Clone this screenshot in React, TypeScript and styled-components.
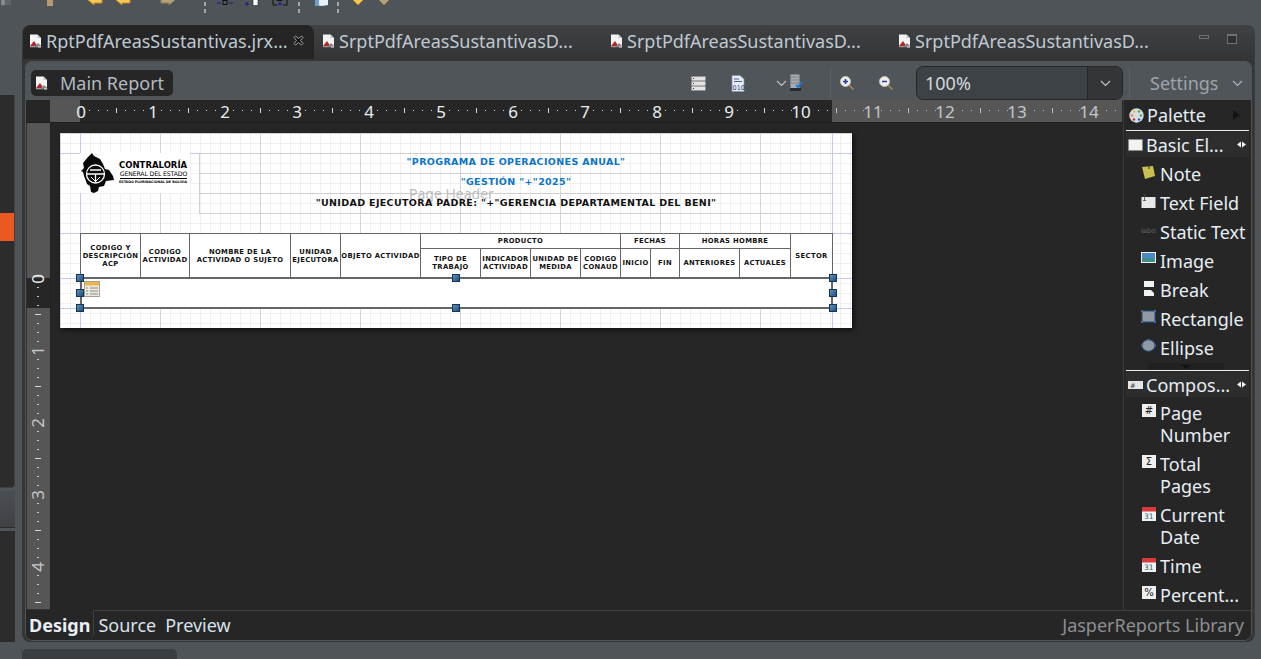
import React from "react"
import styled, { createGlobalStyle } from "styled-components"

const UI_FONT = `"Noto Sans", "Open Sans", sans-serif`
const REPORT_FONT = `"DejaVu Sans", sans-serif`

const GlobalStyle = createGlobalStyle`
  html, body {
    margin: 0;
    padding: 0;
    width: 1261px;
    height: 659px;
    overflow: hidden;
    background: #4f5458;
    font-family: ${UI_FONT};
  }
  * { box-sizing: border-box; }
`

const DocIcon = () => (
  <svg width="13" height="14" viewBox="0 0 13 14">
    <path d="M1 0.500h7.500l3.500 3.500v9.500H1z" fill="#f4f4f4" />
    <path d="M8.500 0.500v3.500h3.500z" fill="#b8c4cc" />
    <path d="M1 12l4-5 3.500 5z" fill="#b5242c" />
    <path d="M6 12l3-3 4 3.500H6z" fill="#8a8a8a" />
    <rect x="1" y="12.600" width="8" height="1" fill="#222" />
  </svg>
)

const CloseIcon = () => (
  <svg width="11" height="11" viewBox="0 0 11 11">
    <path d="M1 2.500L2.500 1 5.500 3.500 8.500 1 10 2.500 7.500 5.500 10 8.500 8.500 10 5.500 7.500 2.500 10 1 8.500 3.500 5.500z" fill="#111" stroke="#a9a9a9" strokeWidth="1" />
  </svg>
)

const Chevron = ({ color = "#c2c2c2" }: { color?: string }) => (
  <svg width="11" height="7" viewBox="0 0 11 7">
    <path d="M1 1l4.500 4.500L10 1" fill="none" stroke={color} strokeWidth="1.200" />
  </svg>
)

const ArrowIcon = ({ color, edge, flip }: { color: string; edge: string; flip?: boolean }) => (
  <svg width="16" height="8" viewBox="0 0 16 8" style={flip ? { transform: "scaleX(-1)" } : undefined}>
    <path d="M1 2L7 7V5h8V0H3z" fill={color} stroke={edge} strokeWidth="1" />
  </svg>
)

const AlignIcon = ({ kind }: { kind: number }) => (
  <svg width="16" height="7" viewBox="0 0 16 7">
    {kind === 0 && <path d="M0 4h4M12 4h4" stroke="#14149a" strokeWidth="1.200" />}
    {kind === 0 && <rect x="6" y="1.500" width="4" height="4" fill="none" stroke="#111" />}
    {kind === 1 && <rect x="9" y="0" width="5" height="6.500" fill="#fff" stroke="#222" strokeWidth="0.600" />}
    {kind === 1 && <path d="M1 5h4M3 3v3.500" stroke="#14149a" strokeWidth="1.100" />}
    {kind === 2 && <path d="M1 1v5h4M15 1v5h-4M5 0v1.500h5V0" fill="none" stroke="#111" />}
    {kind === 2 && <path d="M8 2.500v4M6 5h4" stroke="#14149a" strokeWidth="1" />}
  </svg>
)

const ListIcon = () => (
  <svg width="15" height="15" viewBox="0 0 15 15">
    <rect x="0.500" y="0.500" width="14" height="14" fill="#e4e4e4" stroke="#8a8a8a" strokeWidth="0.500" />
    <path d="M0 5h15M0 10h15" stroke="#555" strokeWidth="0.800" />
    <path d="M2 2.500h1M2 7.500h1M2 12.500h1" stroke="#333" strokeWidth="1" />
  </svg>
)

const BinaryIcon = () => (
  <svg width="14" height="17" viewBox="0 0 14 17">
    <path d="M1 0.500h8l4 3.500v12.500H1z" fill="#e9edf3" stroke="#8792a6" strokeWidth="0.700" />
    <path d="M3 4h5M3 6.500h8" stroke="#3960a8" strokeWidth="1" />
    <text x="1.500" y="15" fontSize="6.500" fontFamily={REPORT_FONT} fill="#1f3f7a">010</text>
  </svg>
)

const CompileIcon = () => (
  <svg width="13" height="18" viewBox="0 0 13 18">
    <rect x="0.500" y="0.500" width="9" height="14" fill="#a8adb3" />
    <path d="M1 3h8M1 6h8M1 9h8" stroke="#777" strokeWidth="0.800" />
    <rect x="0" y="14" width="11" height="3" fill="#2a2a2a" />
    <path d="M6 11l2 2 4-5" fill="none" stroke="#1e78d2" strokeWidth="2" />
  </svg>
)

const ZoomIcon = ({ plus }: { plus?: boolean }) => (
  <svg width="14" height="14" viewBox="0 0 14 14">
    <path d="M9 9l4.500 4.500" stroke="#a88a55" strokeWidth="1.500" />
    <circle cx="5.500" cy="5.500" r="5" fill="#eeeee8" stroke="#c8c2a8" />
    <path d={plus ? "M3 5.500h5M5.500 3v5" : "M3 5.500h5"} stroke="#23389a" strokeWidth="1.600" />
  </svg>
)

const PaletteIcon = () => (
  <svg width="15" height="15" viewBox="0 0 15 15">
    <circle cx="7.500" cy="7.500" r="7.200" fill="#d6dde2" />
    <circle cx="5" cy="3.500" r="1.200" fill="#e8c028" />
    <circle cx="10" cy="3.500" r="1.200" fill="#4caf3c" />
    <circle cx="3" cy="7.500" r="1.200" fill="#e8841c" />
    <circle cx="12" cy="7.500" r="1.200" fill="#48a848" />
    <circle cx="5" cy="11.500" r="1.200" fill="#cc2b2b" />
    <circle cx="10" cy="11.500" r="1.200" fill="#2a58c8" />
  </svg>
)

const SectionIcon = ({ mark }: { mark?: boolean }) => (
  <svg width="15" height="12" viewBox="0 0 15 12">
    {mark ? (
      <>
        <rect x="0" y="2" width="15" height="8" fill="#e4e4e4" />
        <text x="2" y="8.500" fontSize="6.500" fontFamily={REPORT_FONT} fill="#333">#</text>
      </>
    ) : (
      <rect x="0.500" y="0.500" width="14" height="11" fill="#f2f2f2" stroke="#888" strokeWidth="1" strokeDasharray="1 1" />
    )}
  </svg>
)

const PinIcon = () => (
  <svg width="9" height="7" viewBox="0 0 9 7">
    <path d="M0 3.500L4 0.500v6zM9 3.500L5 0.500v6z" fill="#f2f2f2" />
  </svg>
)

const ElementIcon = ({ kind }: { kind: string }) => {
  switch (kind) {
    case "note":
      return (
        <svg width="15" height="15" viewBox="0 0 15 15">
          <path d="M1 2l11-1 2 10-10 3z" fill="#c9bf52" />
          <path d="M8 0v4" stroke="#333" strokeWidth="1" />
        </svg>
      )
    case "text":
      return (
        <svg width="15" height="15" viewBox="0 0 15 15">
          <rect x="0.500" y="3" width="14" height="11" fill="#e8e8e8" />
          <path d="M2 0.500h3M3.500 0.500v6M2 6.500h3" stroke="#444" strokeWidth="0.800" />
        </svg>
      )
    case "label":
      return (
        <svg width="15" height="15" viewBox="0 0 15 15">
          <text x="0" y="10" fontSize="6.500" fontFamily={REPORT_FONT} fill="#666">label</text>
        </svg>
      )
    case "image":
      return (
        <svg width="15" height="11" viewBox="0 0 15 11">
          <rect width="15" height="11" fill="#f0f0f0" />
          <rect x="1" y="1" width="13" height="5" fill="#4d88c4" />
          <rect x="1" y="6" width="13" height="4" fill="#3f8f88" />
        </svg>
      )
    case "break":
      return (
        <svg width="12" height="15" viewBox="0 0 12 15">
          <rect x="1" y="0" width="10" height="6" fill="#eef2f0" />
          <path d="M1 9h7l3 3v3H1z" fill="#eef2f0" />
        </svg>
      )
    case "rect":
      return (
        <svg width="15" height="13" viewBox="0 0 15 13">
          <rect x="1" y="1" width="13" height="11" fill="#8f9aa5" stroke="#2c4d78" strokeWidth="1" />
          <path d="M0 0h2v2H0zM13 0h2v2h-2zM0 11h2v2H0zM13 11h2v2h-2z" fill="#3f6fa8" />
        </svg>
      )
    case "ellipse":
      return (
        <svg width="15" height="13" viewBox="0 0 15 13">
          <ellipse cx="7.500" cy="6.500" rx="6.500" ry="5.800" fill="#8f9aa5" stroke="#2c4d78" strokeWidth="1" />
          <path d="M6.500 0h2v1.500h-2zM0 5.500h1.500v2H0zM13.500 5.500H15v2h-1.500z" fill="#3f6fa8" />
        </svg>
      )
    case "calendar":
      return (
        <svg width="14" height="15" viewBox="0 0 14 15">
          <rect y="1" width="14" height="14" fill="#eef2f2" />
          <rect y="1" width="14" height="4.500" fill="#d63a3a" />
          <text x="2" y="13" fontSize="7.500" fontFamily={REPORT_FONT} fill="#39606a">31</text>
        </svg>
      )
    default:
      return (
        <svg width="14" height="13" viewBox="0 0 14 13">
          <rect width="14" height="13" fill="#efefef" />
          <text x="7" y="10" fontSize="10" textAnchor="middle" fontFamily={REPORT_FONT} fill="#222">{kind}</text>
        </svg>
      )
  }
}

const TableIcon = () => (
  <svg width="16" height="16" viewBox="0 0 16 16">
    <rect x="0.500" y="0.500" width="15" height="15" fill="#ece8dc" stroke="#a5a08f" />
    <rect x="1" y="1" width="14" height="3.500" fill="#e8b84c" />
    <path d="M2 7h2M6 7h8M2 10h2M6 10h8M2 13h2M6 13h8" stroke="#8d8d8d" strokeWidth="1" />
  </svg>
)

const BoliviaLogo = () => (
  <svg width="36" height="40" viewBox="0 0 36 40">
    <path d="M8 4L12 0l2 3 6 3 3 5 2 5 4 1 4 6 1 4-8 1-2 5-5 1-1 4-4 2-3-1-1-6-3-2-3-8-1-4-2-1 3-3-1-5z" fill="#0a0a0a" />
    <circle cx="15.500" cy="21" r="9" fill="none" stroke="#fff" strokeWidth="1.300" />
    <path d="M7 21h17M15.500 21v8M10 17h11" stroke="#fff" strokeWidth="1.300" />
    <path d="M11 24l4 4M20 24l-4 4" stroke="#fff" strokeWidth="1" />
  </svg>
)

const Screen = styled.div`
  width: 1261px;
  height: 659px;
  display: grid;
  grid-template-columns: 22px 1233px 6px;
  grid-template-rows: 25px 617px 17px;
  background: #4f5458;
  overflow: hidden;
`

const TopBar = styled.div`
  grid-column: 1 / 4;
  display: flex;
  align-items: flex-start;
  overflow: hidden;
`

const TopSlot = styled.div<{ $w: number }>`
  flex: 0 0 ${(p) => p.$w}px;
  height: 6px;
  display: flex;
  align-items: flex-end;
  justify-content: flex-end;
  overflow: hidden;
`

const TopSep = styled.div<{ $w: number }>`
  flex: 0 0 ${(p) => p.$w}px;
  display: flex;
  flex-direction: column;
  align-items: flex-end;
  gap: 3px;
  padding-top: 2px;
  &::before, &::after {
    content: "";
    width: 2px;
    height: 4px;
    background: #a5a7a8;
  }
`

const LeftDock = styled.div`
  display: flex;
  flex-direction: column;
  padding-top: 70px;
`

const DockPanel = styled.div`
  width: 15px;
  height: 393px;
  background: #2c2c2c;
  border-right: 1px solid #3e4143;
  border-bottom: 1px solid #3e4143;
  border-radius: 0 0 4px 0;
  padding-top: 118px;
`

const DockMarker = styled.div`
  width: 14px;
  height: 28px;
  background: #ea5a20;
`

const DockGap = styled.div`
  width: 15px;
  height: 37px;
  margin-top: 3px;
  background: linear-gradient(#4a4e52, #3f4245);
  border-bottom: 1px solid #2c2c2c;
`

const DockPanelLower = styled.div`
  width: 15px;
  flex: 1;
  margin-top: 3px;
  background: #2c2c2c;
`

const Editor = styled.div`
  display: flex;
  flex-direction: column;
  background: linear-gradient(#3f4143, #333537 33px);
  border-radius: 8px 8px 8px 8px;
  padding: 0 2px 1px 3px;
  border-right: 1px solid #3a3c3e;
  height: 617px;
`

const TabStrip = styled.div`
  height: 34px;
  flex: none;
  margin-left: -2px;
  display: flex;
  align-items: stretch;
`

const Tab = styled.div<{ $active?: boolean; $w: number }>`
  flex: 0 0 ${(p) => p.$w}px;
  display: flex;
  align-items: center;
  gap: 4px;
  padding: 0 0 3px ${(p) => (p.$active ? 6 : 8)}px;
  background: ${(p) => (p.$active ? "#252525" : "transparent")};
  border-radius: 8px 8px 0 0;
  color: #bfc9d2;
  font-size: 18px;
  white-space: nowrap;
`

const TabClose = styled.span`
  margin-left: auto;
  margin-right: 10px;
  display: flex;
`

const WindowButtons = styled.div`
  margin-left: auto;
  display: flex;
  align-items: center;
  gap: 18px;
  padding: 0 15px 6px 0;
`

const MinimizeGlyph = styled.div`
  width: 10px;
  height: 4px;
  margin-bottom: 5px;
  background: #3c3e40;
  border: 1px solid #6e7173;
`

const MaximizeGlyph = styled.div`
  width: 10px;
  height: 10px;
  background: #2e3032;
  border: 1px solid #6e7173;
  border-top-width: 2px;
`

const InnerPanel = styled.div`
  flex: 1;
  margin-top: 2px;
  min-height: 0;
  display: flex;
  flex-direction: column;
  background: #262626;
  border: 1px solid #515457;
  border-radius: 6px 6px 8px 8px;
  overflow: hidden;
`

const Toolbar = styled.div`
  height: 38px;
  flex: none;
  display: flex;
  align-items: center;
  background: #505559;
  padding: 4px 0 0 5px;
`

const MainReport = styled.div`
  width: 142px;
  height: 26px;
  display: flex;
  align-items: center;
  gap: 12px;
  padding-left: 4px;
  background: #262626;
  border-radius: 5px;
  color: #b3bac0;
  font-size: 18px;
`

const ToolIcon = styled.div<{ $ml: number }>`
  margin-left: ${(p) => p.$ml}px;
  display: flex;
  align-items: center;
`

const ToolSep = styled.div<{ $ml: number }>`
  margin-left: ${(p) => p.$ml}px;
  width: 1px;
  height: 30px;
  background: #5c6165;
`

const ZoomCombo = styled.div`
  margin-left: 23px;
  width: 207px;
  height: 34px;
  display: flex;
  align-items: stretch;
  background: #3d4246;
  border: 1px solid #262626;
  border-radius: 7px;
  overflow: hidden;
  color: #d4d8dc;
  font-size: 18px;
`

const ZoomValue = styled.div`
  flex: 1;
  display: flex;
  align-items: center;
  padding-left: 8px;
  border-right: 1px solid #262626;
`

const ZoomButton = styled.div`
  flex: 0 0 34px;
  display: flex;
  align-items: center;
  justify-content: center;
  background: #333538;
`

const SettingsLabel = styled.div`
  margin-left: 20px;
  color: #9ea4a9;
  font-size: 18px;
  width: 82px;
`

const Body = styled.div`
  flex: 1;
  min-height: 0;
  display: flex;
`

const DesignArea = styled.div`
  flex: 0 0 1097px;
  display: flex;
  flex-direction: column;
  min-width: 0;
`

const RulerRow = styled.div`
  flex: none;
  height: 23px;
  display: flex;
  background: #262626;
  border-bottom: 1px solid #1e1e1e;
`

const RulerCorner = styled.div`
  flex: 0 0 24px;
`

const CanvasRow = styled.div`
  flex: 1;
  min-height: 0;
  display: flex;
`

const RulerColumn = styled.div`
  flex: 0 0 24px;
  padding-left: 1px;
  background: #303030;
`

const CanvasScroll = styled.div`
  flex: 1;
  min-width: 0;
  padding: 10px 0 0 9px;
  background: #262626;
  border-left: 1px solid #202020;
`

const ReportPage = styled.div`
  position: relative;
  width: 792px;
  height: 195px;
  box-shadow: 2px 2px 5px rgba(0, 0, 0, 0.6);
  background-color: #fff;
  background-image:
    linear-gradient(to right, #d6d6d6 1px, transparent 1px),
    linear-gradient(to bottom, #d6d6d6 1px, transparent 1px),
    linear-gradient(to right, #f0f0f0 1px, transparent 1px),
    linear-gradient(to bottom, #f0f0f0 1px, transparent 1px);
  background-size: 100px 100px, 100px 100px, 10px 10px, 10px 10px;
  font-family: ${REPORT_FONT};
`

const Guide = styled.div<{ $v?: boolean; $at: number }>`
  position: absolute;
  background: #c8c8f4;
  ${(p) =>
    p.$v
      ? `left: ${p.$at}px; top: 0; bottom: 0; width: 1px;`
      : `top: ${p.$at}px; left: 0; right: 0; height: 1px;`}
`

const HeaderLine = styled.div<{ $y: number }>`
  position: absolute;
  left: 139px;
  width: 633px;
  top: ${(p) => p.$y}px;
  height: 1px;
  background: #cfcfcf;
`

const HeaderEdge = styled.div`
  position: absolute;
  left: 139px;
  top: 20px;
  width: 1px;
  height: 60px;
  background: #cfcfcf;
`

const HeaderText = styled.div<{ $y: number; $blue?: boolean }>`
  position: absolute;
  left: 140px;
  width: 632px;
  top: ${(p) => p.$y}px;
  height: 20px;
  line-height: 20px;
  text-align: center;
  font-weight: 700;
  font-size: 9.500px;
  letter-spacing: 0.350px;
  white-space: nowrap;
  color: ${(p) => (p.$blue ? "#0a74c8" : "#111")};
`

const BandLabel = styled.div`
  position: absolute;
  left: 349px;
  top: 52px;
  font-family: ${UI_FONT};
  font-size: 14px;
  line-height: 18px;
  color: #bdbdbd;
`

const LogoBox = styled.div`
  position: absolute;
  left: 20px;
  top: 20px;
  width: 110px;
  height: 40px;
  background: #fff;
  display: flex;
  align-items: center;
  gap: 3px;
`

const LogoText = styled.div`
  display: flex;
  flex-direction: column;
  color: #000;
  white-space: nowrap;
  align-items: flex-end;
`

const LogoTitle = styled.div`
  font-weight: 700;
  font-size: 8.500px;
  line-height: 10px;
`

const LogoSub = styled.div`
  font-size: 6.200px;
  line-height: 8px;
  letter-spacing: -0.150px;
  border-bottom: 1px solid #000;
`

const LogoTiny = styled.div`
  font-size: 3.300px;
  font-weight: 700;
  line-height: 7px;
`

const Cell = styled.div<{ $x: number; $y: number; $w: number; $h: number }>`
  position: absolute;
  left: ${(p) => p.$x}px;
  top: ${(p) => p.$y}px;
  width: ${(p) => p.$w}px;
  height: ${(p) => p.$h}px;
  display: flex;
  align-items: center;
  justify-content: center;
  text-align: center;
  white-space: pre;
  font-size: 6.800px;
  font-weight: 700;
  line-height: 8px;
  letter-spacing: 0.350px;
  color: #111;
  background: #fff;
  border: 1px solid #666;
`

const SelectedBand = styled.div`
  position: absolute;
  left: 20px;
  top: 144px;
  width: 753px;
  height: 32px;
  background: #fff;
  border: 2px solid #666;
  padding: 2px 0 0 2px;
`

const Handle = styled.div<{ $x: number; $y: number }>`
  position: absolute;
  left: ${(p) => p.$x - 4}px;
  top: ${(p) => p.$y - 4}px;
  width: 8px;
  height: 8px;
  background: linear-gradient(135deg, #5f92bf, #1f4f7f);
  border: 1px solid #16334f;
`

const Palette = styled.div`
  flex: 1;
  min-width: 0;
  display: flex;
  flex-direction: column;
  background: #262626;
  border-left: 1px solid #3a3a3a;
  color: #e6eef4;
  font-size: 18px;
`

const PaletteHeader = styled.div`
  flex: none;
  height: 31px;
  margin: 0 2px;
  display: flex;
  align-items: center;
  gap: 3px;
  padding-left: 3px;
  border-bottom: 1px solid #f0f0f0;
`

const PaletteArrow = styled.div`
  margin-left: auto;
  margin-right: 9px;
  width: 0;
  height: 0;
  border-left: 7px solid #141414;
  border-top: 5px solid transparent;
  border-bottom: 5px solid transparent;
`

const DrawerHead = styled.div`
  flex: none;
  height: 25px;
  margin: 1px 2px 0;
  display: flex;
  align-items: center;
  gap: 3px;
  padding-left: 2px;
  background: #2d2d2d;
`

const DrawerPin = styled.div`
  margin-left: auto;
  margin-right: 3px;
  display: flex;
`

const DrawerItems = styled.div<{ $h: number; $top: number }>`
  position: relative;
  flex: none;
  height: ${(p) => p.$h}px;
  overflow: hidden;
  padding: ${(p) => p.$top}px 0 0 17px;
`

const DrawerLine = styled.div`
  height: 1px;
  flex: none;
  margin: 0 2px;
  background: #f0f0f0;
`

const PaletteItem = styled.div`
  display: flex;
  gap: 4px;
  padding: 3px 0 4px;
  line-height: 22px;
  color: #e6eef4;
`

const ItemIcon = styled.div`
  flex: 0 0 15px;
  height: 18px;
  display: flex;
  align-items: flex-start;
  justify-content: center;
  padding-top: 2px;
`

const ItemLabel = styled.span`
  white-space: pre;
`

const ScrollHint = styled.div`
  position: absolute;
  left: 24px;
  bottom: 0;
  width: 76px;
  height: 7px;
  background: #202020;
  display: flex;
  justify-content: center;
  &::after {
    content: "";
    margin-top: 2px;
    border-left: 4px solid transparent;
    border-right: 4px solid transparent;
    border-top: 4px solid #111;
  }
`

const Footer = styled.div`
  flex: none;
  height: 30px;
  display: flex;
  align-items: stretch;
  background: #262626;
  font-size: 18px;
  color: #d8e2ea;
  padding-bottom: 1px;
`

const FooterTab = styled.div<{ $active?: boolean }>`
  display: flex;
  align-items: center;
  padding: 0 ${(p) => (p.$active ? 3 : 5)}px 0 ${(p) => (p.$active ? 3 : 4)}px;
  font-weight: ${(p) => (p.$active ? 700 : 400)};
  border-top: 1px solid ${(p) => (p.$active ? "transparent" : "#414141")};
  ${(p) => p.$active && "border-right: 1px solid #414141; border-radius: 0 0 6px 0; color: #e8eff5;"}
`

const FooterFill = styled.div`
  flex: 1;
  border-top: 1px solid #414141;
  display: flex;
  align-items: center;
  justify-content: flex-end;
  padding-right: 7px;
  color: #8c8f92;
`

const BottomRow = styled.div`
  grid-column: 1 / 4;
  padding: 8px 0 0 22px;
  margin-top: -1px;
  display: flex;
`

const BottomStub = styled.div`
  width: 155px;
  height: 10px;
  background: #3b3e41;
  border-radius: 5px 5px 0 0;
`

const HRuler = () => {
  const ticks: React.ReactNode[] = []
  for (let i = 0; i * 9 <= 1072 - 30; i++) {
    const x = 30 + i * 9
    const lit = x <= 782
    const colour = lit ? "#d8d8d8" : "#bcbcbc"
    if (i % 8 === 0) {
      ticks.push(
        <text key={i} x={x + 1} y={18} fill={lit ? "#e8eef2" : "#c2c6ca"} fontSize="17" textAnchor="middle" fontFamily={UI_FONT}>
          {i / 8}
        </text>
      )
    } else if (i % 4 === 0) {
      ticks.push(<rect key={i} x={x} y={8} width="1" height="5" fill={colour} />)
    } else {
      ticks.push(<rect key={i} x={x} y={10} width="1" height="1" fill={colour} />)
    }
  }
  return (
    <svg width="1072" height="22" viewBox="0 0 1072 22">
      <rect x="0" y="0" width="30" height="22" fill="#565656" />
      <rect x="782" y="0" width="290" height="22" fill="#565656" />
      {ticks}
    </svg>
  )
}

const VRuler = () => {
  const top = 155
  const ticks: React.ReactNode[] = []
  for (let i = 0; top + i * 9 < 486; i++) {
    const y = top + i * 9
    if (i % 8 === 0) {
      const n = i / 8
      ticks.push(
        <text key={i} x={0} y={0} transform={`translate(17 ${y + 1}) rotate(-90)`} fill={n === 0 ? "#e8eef2" : "#c2c6ca"} fontSize="17" textAnchor="middle" fontFamily={UI_FONT}>
          {n}
        </text>
      )
    } else if (i % 4 === 0) {
      ticks.push(<rect key={i} x={8} y={y} width="6" height="1" fill="#d8d8d8" />)
    } else {
      ticks.push(<rect key={i} x={10} y={y} width="2" height="1" fill="#c8c8c8" />)
    }
  }
  return (
    <svg width="23" height="486" viewBox="0 0 23 486">
      <rect width="23" height="486" fill="#565656" />
      <rect y={top} width="23" height="30" fill="#262626" />
      {ticks}
    </svg>
  )
}

const cells = [
  { x: 20, y: 100, w: 61, h: 45, t: "CODIGO Y\nDESCRIPCIÓN\nACP" },
  { x: 80, y: 100, w: 50, h: 45, t: "CODIGO\nACTIVIDAD" },
  { x: 129, y: 100, w: 102, h: 45, t: "NOMBRE DE LA\nACTIVIDAD O SUJETO" },
  { x: 230, y: 100, w: 51, h: 45, t: "UNIDAD\nEJECUTORA" },
  { x: 280, y: 100, w: 81, h: 45, t: "OBJETO ACTIVIDAD" },
  { x: 360, y: 100, w: 201, h: 16, t: "PRODUCTO" },
  { x: 360, y: 115, w: 61, h: 30, t: "TIPO DE\nTRABAJO" },
  { x: 420, y: 115, w: 51, h: 30, t: "INDICADOR\nACTIVIDAD" },
  { x: 470, y: 115, w: 51, h: 30, t: "UNIDAD DE\nMEDIDA" },
  { x: 520, y: 115, w: 41, h: 30, t: "CODIGO\nCONAUD" },
  { x: 560, y: 100, w: 60, h: 16, t: "FECHAS" },
  { x: 560, y: 115, w: 31, h: 30, t: "INICIO" },
  { x: 590, y: 115, w: 30, h: 30, t: "FIN" },
  { x: 619, y: 100, w: 112, h: 16, t: "HORAS HOMBRE" },
  { x: 619, y: 115, w: 61, h: 30, t: "ANTERIORES" },
  { x: 679, y: 115, w: 52, h: 30, t: "ACTUALES" },
  { x: 730, y: 100, w: 43, h: 45, t: "SECTOR" },
]

const handles = [
  [20, 145], [20, 160], [20, 175],
  [396, 145], [396, 175],
  [773, 145], [773, 160], [773, 175],
]

const basicItems = [
  { k: "note", t: "Note" },
  { k: "text", t: "Text Field" },
  { k: "label", t: "Static Text" },
  { k: "image", t: "Image" },
  { k: "break", t: "Break" },
  { k: "rect", t: "Rectangle" },
  { k: "ellipse", t: "Ellipse" },
]

const compositeItems = [
  { k: "#", t: "Page\nNumber" },
  { k: "Σ", t: "Total\nPages" },
  { k: "calendar", t: "Current\nDate" },
  { k: "calendar", t: "Time" },
  { k: "%", t: "Percent..." },
]

export default function App() {
  return (
    <Screen>
      <GlobalStyle />
      <TopBar>
        <TopSlot $w={12}><svg width="11" height="8"><path d="M0 1h4v6H0zM5 2h5M5 4h5M5 6h5" fill="#8a8f92" stroke="#777" /></svg></TopSlot>
        <TopSlot $w={44}><svg width="12" height="8"><path d="M3 0h6v8H3z" fill="#b79a6a" /></svg></TopSlot>
        <TopSlot $w={47}><ArrowIcon color="#f5c85a" edge="#c98a1a" /></TopSlot>
        <TopSlot $w={28}><ArrowIcon color="#f5c85a" edge="#c98a1a" /></TopSlot>
        <TopSlot $w={45}><ArrowIcon color="#b5a276" edge="#8f7f58" flip /></TopSlot>
        <TopSep $w={30} />
        <TopSlot $w={27}><AlignIcon kind={0} /></TopSlot>
        <TopSlot $w={27}><AlignIcon kind={1} /></TopSlot>
        <TopSlot $w={28}><AlignIcon kind={2} /></TopSlot>
        <TopSep $w={12} />
        <TopSlot $w={28}><svg width="13" height="8"><path d="M0 0h13v7l-6 1-7-1z" fill="#e8f0f8" /><path d="M0 0h4v8H0z" fill="#6f9fd0" /></svg></TopSlot>
        <TopSep $w={11} />
        <TopSlot $w={26}><svg width="14" height="8"><path d="M0 0h14L7 7z" fill="#f5c85a" stroke="#c98a1a" /></svg></TopSlot>
        <TopSlot $w={26}><svg width="14" height="8"><path d="M0 0h14L7 7z" fill="#b5a276" stroke="#8f7f58" /></svg></TopSlot>
      </TopBar>
      <LeftDock>
        <DockPanel><DockMarker /></DockPanel>
        <DockGap />
        <DockPanelLower />
      </LeftDock>
      <Editor>
        <TabStrip>
          <Tab $active $w={291}>
            <DocIcon />
            RptPdfAreasSustantivas.jrx...
            <TabClose><CloseIcon /></TabClose>
          </Tab>
          <Tab $w={288}><DocIcon />SrptPdfAreasSustantivasD...</Tab>
          <Tab $w={288}><DocIcon />SrptPdfAreasSustantivasD...</Tab>
          <Tab $w={280}><DocIcon />SrptPdfAreasSustantivasD...</Tab>
          <WindowButtons>
            <MinimizeGlyph />
            <MaximizeGlyph />
          </WindowButtons>
        </TabStrip>
        <InnerPanel>
          <Toolbar>
            <MainReport><DocIcon />Main Report</MainReport>
            <ToolIcon $ml={518}><ListIcon /></ToolIcon>
            <ToolIcon $ml={25}><BinaryIcon /></ToolIcon>
            <ToolIcon $ml={31}><Chevron /></ToolIcon>
            <ToolIcon $ml={3}><CompileIcon /></ToolIcon>
            <ToolSep $ml={27} />
            <ToolIcon $ml={9}><ZoomIcon plus /></ToolIcon>
            <ToolIcon $ml={25}><ZoomIcon /></ToolIcon>
            <ZoomCombo>
              <ZoomValue>100%</ZoomValue>
              <ZoomButton><Chevron /></ZoomButton>
            </ZoomCombo>
            <ToolSep $ml={6} />
            <SettingsLabel>Settings</SettingsLabel>
            <Chevron color="#aeb3b7" />
          </Toolbar>
          <Body>
            <DesignArea>
              <RulerRow>
                <RulerCorner />
                <HRuler />
              </RulerRow>
              <CanvasRow>
                <RulerColumn><VRuler /></RulerColumn>
                <CanvasScroll>
                  <ReportPage>
                    <Guide $at={20} />
                    <Guide $at={100} />
                    <Guide $at={145} />
                    <Guide $at={175} />
                    <Guide $v $at={20} />
                    <Guide $v $at={772} />
                    <HeaderLine $y={20} />
                    <HeaderLine $y={40} />
                    <HeaderLine $y={60} />
                    <HeaderLine $y={80} />
                    <HeaderEdge />
                    <LogoBox>
                      <BoliviaLogo />
                      <LogoText>
                        <LogoTitle>CONTRALORÍA</LogoTitle>
                        <LogoSub>GENERAL DEL ESTADO</LogoSub>
                        <LogoTiny>ESTADO PLURINACIONAL DE BOLIVIA</LogoTiny>
                      </LogoText>
                    </LogoBox>
                    <HeaderText $y={19} $blue>"PROGRAMA DE OPERACIONES ANUAL"</HeaderText>
                    <HeaderText $y={39} $blue>"GESTIÓN "+"2025"</HeaderText>
                    <BandLabel>Page Header</BandLabel>
                    <HeaderText $y={60}>"UNIDAD EJECUTORA PADRE: "+"GERENCIA DEPARTAMENTAL DEL BENI"</HeaderText>
                    {cells.map((c) => (
                      <Cell key={`${c.x}-${c.y}`} $x={c.x} $y={c.y} $w={c.w} $h={c.h}>{c.t}</Cell>
                    ))}
                    <SelectedBand><TableIcon /></SelectedBand>
                    {handles.map(([x, y]) => (
                      <Handle key={`${x}-${y}`} $x={x} $y={y} />
                    ))}
                  </ReportPage>
                </CanvasScroll>
              </CanvasRow>
            </DesignArea>
            <Palette>
              <PaletteHeader>
                <PaletteIcon />
                Palette
                <PaletteArrow />
              </PaletteHeader>
              <DrawerHead>
                <SectionIcon />
                Basic El...
                <DrawerPin><PinIcon /></DrawerPin>
              </DrawerHead>
              <DrawerItems $h={213} $top={3}>
                {basicItems.map((item) => (
                  <PaletteItem key={item.t}>
                    <ItemIcon><ElementIcon kind={item.k} /></ItemIcon>
                    <ItemLabel>{item.t}</ItemLabel>
                  </PaletteItem>
                ))}
                <ScrollHint />
              </DrawerItems>
              <DrawerLine />
              <DrawerHead>
                <SectionIcon mark />
                Compos...
                <DrawerPin><PinIcon /></DrawerPin>
              </DrawerHead>
              <DrawerItems $h={999} $top={2}>
                {compositeItems.map((item) => (
                  <PaletteItem key={item.t}>
                    <ItemIcon><ElementIcon kind={item.k} /></ItemIcon>
                    <ItemLabel>{item.t}</ItemLabel>
                  </PaletteItem>
                ))}
              </DrawerItems>
            </Palette>
          </Body>
          <Footer>
            <FooterTab $active>Design</FooterTab>
            <FooterTab>Source</FooterTab>
            <FooterTab>Preview</FooterTab>
            <FooterFill>JasperReports Library</FooterFill>
          </Footer>
        </InnerPanel>
      </Editor>
      <div />
      <BottomRow><BottomStub /></BottomRow>
    </Screen>
  )
}
